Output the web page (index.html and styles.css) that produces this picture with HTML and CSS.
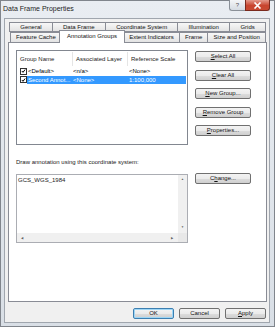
FILE: index.html
```html
<!DOCTYPE html>
<html lang="en">
<head>
    <meta charset="UTF-8">
    <title>Data Frame Properties</title>
    <link rel="stylesheet" href="styles.css">
</head>
<body>
    <div class="window">
        <div class="titlebar">
            <span class="title">Data Frame Properties</span>
            <div class="controls">
                <span class="ctl help">?</span>
                <span class="ctl close">
                    <svg width="9" height="7" viewBox="0 0 9 7"><path d="M1.5 0.5 L7.5 6.5 M7.5 0.5 L1.5 6.5" stroke="#fff" stroke-width="1.6"/></svg>
                </span>
            </div>
        </div>

        <div class="client">
            <div class="tabs">
                <div class="tab-row row1">
                    <span class="tab">General</span>
                    <span class="tab">Data Frame</span>
                    <span class="tab">Coordinate System</span>
                    <span class="tab">Illumination</span>
                    <span class="tab">Grids</span>
                </div>
                <div class="tab-row row2">
                    <span class="tab">Feature Cache</span>
                    <span class="tab active">Annotation Groups</span>
                    <span class="tab">Extent Indicators</span>
                    <span class="tab">Frame</span>
                    <span class="tab">Size and Position</span>
                </div>
            </div>

            <div class="panel">
                <div class="group-row">
                    <div class="list">
                        <div class="list-head">
                            <span class="col c1">Group Name</span>
                            <span class="col c2">Associated Layer</span>
                            <span class="col c3">Reference Scale</span>
                        </div>
                        <div class="list-item">
                            <span class="check"><svg width="6" height="6" viewBox="0 0 6 6"><path d="M1 3 L2.4 4.6 L5 1.2" stroke="#000" stroke-width="1.2" fill="none"/></svg></span>
                            <span class="cell c1">&lt;Default&gt;</span>
                            <span class="cell c2">&lt;n/a&gt;</span>
                            <span class="cell c3">&lt;None&gt;</span>
                        </div>
                        <div class="list-item selected">
                            <span class="check"><svg width="6" height="6" viewBox="0 0 6 6"><path d="M1 3 L2.4 4.6 L5 1.2" stroke="#000" stroke-width="1.2" fill="none"/></svg></span>
                            <span class="cell c1">Second Annot...</span>
                            <span class="cell c2">&lt;None&gt;</span>
                            <span class="cell c3">1:100,000</span>
                        </div>
                    </div>
                    <div class="side-buttons">
                        <button class="btn"><u>S</u>elect All</button>
                        <button class="btn"><u>C</u>lear All</button>
                        <button class="btn"><u>N</u>ew Group...</button>
                        <button class="btn"><u>R</u>emove Group</button>
                        <button class="btn"><u>P</u>roperties...</button>
                    </div>
                </div>

                <div class="coord-label">Draw annotation using this coordinate system:</div>

                <div class="coord-row">
                    <div class="textbox">
                        <div class="text-area">
                            <div class="text-content">GCS_WGS_1984</div>
                            <div class="vscroll">
                                <span class="arrow">&#9650;</span>
                                <span class="arrow">&#9660;</span>
                            </div>
                        </div>
                        <div class="hscroll">
                            <div class="hbar">
                                <span class="arrow">&#9664;</span>
                                <span class="arrow">&#9654;</span>
                            </div>
                            <div class="corner"></div>
                        </div>
                    </div>
                    <button class="btn change">C<u>h</u>ange...</button>
                </div>
            </div>

            <div class="footer">
                <button class="btn dlg default">OK</button>
                <button class="btn dlg">Cancel</button>
                <button class="btn dlg"><u>A</u>pply</button>
            </div>
        </div>
    </div>
</body>
</html>
```

FILE: styles.css
```css
* {
    box-sizing: border-box;
}
body {
    margin: 0;
    font-family: "Liberation Sans", Arial, sans-serif;
    font-size: 6px;
    color: #000;
    background: #fff;
}
.window {
    width: 275px;
    height: 327px;
    border: 1px solid #80858c;
    background: linear-gradient(#e9edf2, #d9dfe6);
    display: flex;
    flex-direction: column;
}
.titlebar {
    height: 17px;
    display: flex;
    align-items: flex-start;
}
.title {
    font-size: 7px;
    line-height: 15px;
    padding-left: 2px;
    color: #1e1e1e;
}
.controls {
    margin-left: auto;
    margin-right: 4px;
    display: flex;
    margin-top: -1px;
}
.ctl {
    height: 11px;
    display: flex;
    align-items: center;
    justify-content: center;
    border: 1px solid #8a9098;
    border-top: none;
}
.help {
    width: 16px;
    border-right: none;
    border-radius: 0 0 0 3px;
    background: linear-gradient(#f4f6f8, #d5dbe2);
    color: #555;
    font-size: 6px;
}
.close {
    width: 25px;
    border-color: #7a2a1e;
    border-radius: 0 0 3px 0;
    background: linear-gradient(#e49a8c, #c8452f 55%, #c84a32);
}
.client {
    flex: 1;
    margin: 0 4px 3px 3px;
    border: 1px solid #a0a6ae;
    background: #f0f0f0;
    padding: 3px 3px 0 3px;
    display: flex;
    flex-direction: column;
}
.tabs {
    display: flex;
    flex-direction: column;
}
.tab-row {
    display: flex;
    height: 10px;
    align-items: flex-end;
}
.row1 {
    margin: 0 1px 0 1px;
}
.row2 {
    margin: 0 1px 0 2px;
}
.tab {
    flex: 1 1 auto;
    height: 10px;
    line-height: 9px;
    text-align: center;
    white-space: nowrap;
    padding: 0 4px;
    border: 1px solid #898c95;
    border-bottom: none;
    margin-right: -1px;
    background: linear-gradient(#f7f7f7, #e3e3e3);
    color: #111;
}
.row1 .tab {
    border-bottom: 1px solid #898c95;
}
.tab.active {
    position: relative;
    z-index: 1;
    background: #fff;
    height: 13px;
    margin: -2px -2px -1px -2px;
    line-height: 10px;
    padding: 0 6px;
}
.panel {
    height: 260px;
    margin-left: 0;
    margin-right: -1px;
    background: #fff;
    border: 1px solid #898c95;
    padding: 7px 7px 0 7px;
}
.group-row {
    display: flex;
}
.list {
    width: 172px;
    height: 95px;
    border: 1px solid #828790;
    background: #fff;
}
.list-head {
    display: flex;
    height: 16px;
    align-items: center;
}
.col {
    height: 14px;
    line-height: 14px;
    padding-left: 3px;
    border-right: 1px solid #e5e5e5;
    color: #222;
}
.c1 {
    width: 56px;
}
.c2 {
    width: 55px;
}
.c3 {
    width: 58px;
}
.list-head .c3 {
    border-right: none;
}
.list-item {
    display: flex;
    height: 8.5px;
    align-items: center;
    padding-left: 3px;
    margin-right: 1px;
}
.check {
    width: 7px;
    height: 7px;
    border: 1px solid #333;
    background: #fff;
    display: flex;
    align-items: center;
    justify-content: center;
    flex: none;
}
.cell {
    line-height: 8.5px;
    white-space: nowrap;
    overflow: hidden;
}
.list-item .c1 {
    width: 46px;
    padding-left: 1px;
}
.list-item .c2 {
    width: 56px;
}
.list-item .c3 {
    flex: 1;
}
.list-item.selected .cell {
    background: #3399ff;
    color: #fff;
}
.side-buttons {
    display: flex;
    flex-direction: column;
    gap: 7.5px;
    margin-left: 7px;
    padding-top: 1px;
}
.btn {
    width: 56px;
    height: 11px;
    padding: 0;
    font-family: "Liberation Sans", Arial, sans-serif;
    font-size: 6px;
    color: #111;
    border: 1px solid #707070;
    border-radius: 2px;
    background: linear-gradient(#f3f3f3 0%, #ebebeb 50%, #dddddd 51%, #cfcfcf 100%);
    line-height: 9px;
}
.coord-label {
    margin-top: 13px;
    height: 8px;
    line-height: 8px;
    color: #222;
}
.coord-row {
    display: flex;
    margin-top: 8px;
    align-items: flex-start;
}
.textbox {
    width: 172px;
    height: 69px;
    border: 1px solid #abadb3;
    display: flex;
    flex-direction: column;
    background: #fff;
}
.text-area {
    flex: 1;
    display: flex;
}
.text-content {
    flex: 1;
    padding: 2px 0 0 1px;
    color: #222;
}
.vscroll {
    width: 9px;
    background: #f0f0f0;
    display: flex;
    flex-direction: column;
    justify-content: space-between;
    align-items: center;
    padding: 2px 0 4px;
}
.arrow {
    font-size: 3px;
    color: #606060;
}
.hscroll {
    height: 9px;
    display: flex;
}
.hbar {
    flex: 1;
    background: #f0f0f0;
    display: flex;
    justify-content: space-between;
    align-items: center;
    padding: 0 5px 0 4px;
}
.corner {
    width: 9px;
    background: #e8e8e8;
}
.change {
    margin-left: 7px;
    margin-top: -1px;
}
.footer {
    display: flex;
    justify-content: flex-end;
    gap: 5px;
    padding-top: 6px;
}
.dlg {
    width: 41px;
}
.default {
    border-color: #3c7fb1;
    box-shadow: inset 0 0 0 1px #9fd6f5;
}
```
